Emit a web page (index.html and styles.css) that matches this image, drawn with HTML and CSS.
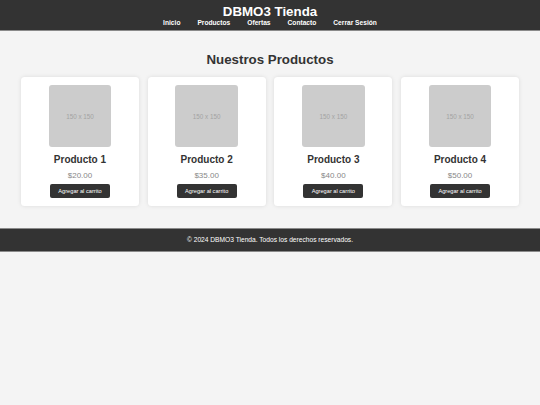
FILE: index.html
```html
<!DOCTYPE html>
<html lang="es">
<head>
<meta charset="utf-8">
<title>DBMO3 Tienda</title>
<link rel="stylesheet" href="styles.css">
</head>
<body>
<header class="site-header">
  <h1 class="brand">DBMO3 Tienda</h1>
  <nav class="nav">
    <a href="#">Inicio</a>
    <a href="#">Productos</a>
    <a href="#">Ofertas</a>
    <a href="#">Contacto</a>
    <a href="#">Cerrar Sesión</a>
  </nav>
</header>
<main class="main">
  <h2 class="title">Nuestros Productos</h2>
  <div class="grid">
    <div class="card">
      <div class="thumb">150 x 150</div>
      <h3 class="name">Producto 1</h3>
      <p class="price">$20.00</p>
      <button class="btn">Agregar al carrito</button>
    </div>
    <div class="card">
      <div class="thumb">150 x 150</div>
      <h3 class="name">Producto 2</h3>
      <p class="price">$35.00</p>
      <button class="btn">Agregar al carrito</button>
    </div>
    <div class="card">
      <div class="thumb">150 x 150</div>
      <h3 class="name">Producto 3</h3>
      <p class="price">$40.00</p>
      <button class="btn">Agregar al carrito</button>
    </div>
    <div class="card">
      <div class="thumb">150 x 150</div>
      <h3 class="name">Producto 4</h3>
      <p class="price">$50.00</p>
      <button class="btn">Agregar al carrito</button>
    </div>
  </div>
</main>
<footer class="site-footer">© 2024 DBMO3 Tienda. Todos los derechos reservados.</footer>
</body>
</html>
```
FILE: styles.css
```css
* { box-sizing: border-box; }
html, body { margin: 0; padding: 0; }
body {
  background: #f4f4f4;
  color: #333;
  font-family: "Liberation Sans", Arial, sans-serif;
}
.site-header {
  background: #333;
  color: #fff;
  text-align: center;
  padding: 4px 0 3px;
  border-bottom: 1px solid #8a8a8a;
}
.brand {
  margin: 0;
  font-size: 13.3px;
  line-height: 15px;
  font-weight: bold;
}
.nav {
  display: flex;
  justify-content: center;
  gap: 17px;
  font-size: 6.65px;
  line-height: 8px;
  font-weight: bold;
}
.nav a { color: #fff; text-decoration: none; }
.main { padding: 8px; }
.title {
  text-align: center;
  font-size: 13.3px;
  line-height: 15.3px;
  margin: 13px 0 9.4px;
  font-weight: bold;
}
.grid {
  display: grid;
  grid-template-columns: repeat(4, 118px);
  gap: 8.7px;
  justify-content: center;
}
.card {
  background: #fff;
  border-radius: 3.5px;
  box-shadow: 0 0 4px rgba(0, 0, 0, 0.1);
  padding: 8.2px 8px 8px;
  text-align: center;
  display: flex;
  flex-direction: column;
  align-items: center;
}
.thumb {
  width: 62.5px;
  height: 62.5px;
  background: #ccc;
  border-radius: 3px;
  color: #a3a3a3;
  font-size: 6.3px;
  display: flex;
  align-items: center;
  justify-content: center;
}
.name {
  margin: 6.2px 0 5.5px;
  font-size: 10px;
  line-height: 11.5px;
  font-weight: bold;
  color: #333;
}
.price {
  margin: 0 0 4px;
  font-size: 8px;
  line-height: 9.2px;
  color: #888;
}
.btn {
  display: block;
  background: #333;
  color: #fff;
  border: none;
  border-radius: 2px;
  font-family: "Liberation Sans", Arial, sans-serif;
  font-size: 5.65px;
  line-height: 6.4px;
  padding: 4.15px 8.35px;
  margin: 0;
}
.site-footer {
  margin-top: 13.3px;
  background: #333;
  color: #fff;
  text-align: center;
  font-size: 6.65px;
  line-height: 7.6px;
  padding: 7.3px 0;
  border-top: 1px solid #8a8a8a;
  border-bottom: 1px solid #8a8a8a;
}
```
